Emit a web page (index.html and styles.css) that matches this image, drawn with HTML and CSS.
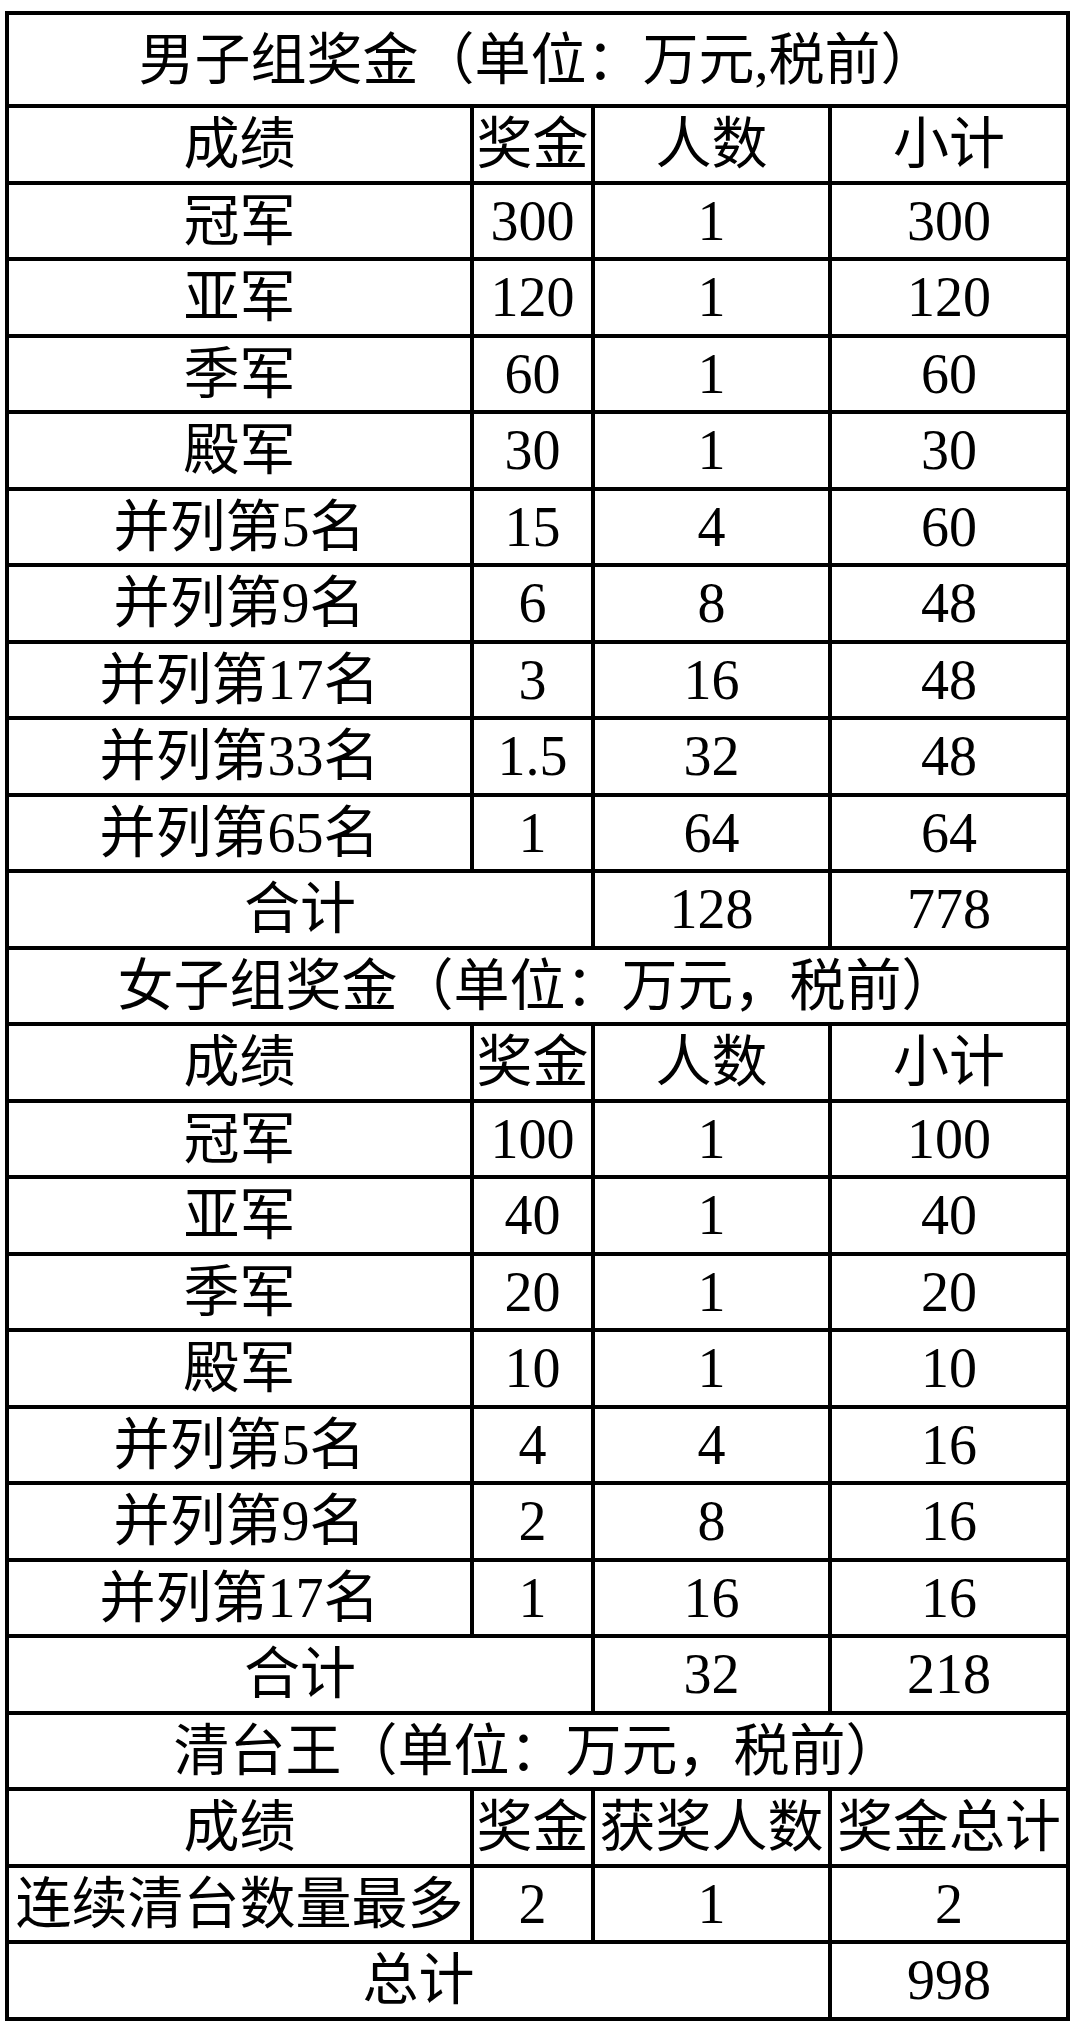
FILE: index.html
```html
<!DOCTYPE html>
<html lang="zh-CN">
<head>
<meta charset="utf-8">
<title>奖金表</title>
<link rel="stylesheet" href="styles.css">
</head>
<body>
<table class="prize">
  <colgroup>
    <col class="c-rank">
    <col class="c-prize">
    <col class="c-count">
    <col class="c-sum">
  </colgroup>
  <tbody>
    <tr class="first-title"><td colspan="4">男子组奖金（单位：万元,税前）</td></tr>
    <tr><td>成绩</td><td>奖金</td><td>人数</td><td>小计</td></tr>
    <tr><td>冠军</td><td>300</td><td>1</td><td>300</td></tr>
    <tr><td>亚军</td><td>120</td><td>1</td><td>120</td></tr>
    <tr><td>季军</td><td>60</td><td>1</td><td>60</td></tr>
    <tr><td>殿军</td><td>30</td><td>1</td><td>30</td></tr>
    <tr><td>并列第5名</td><td>15</td><td>4</td><td>60</td></tr>
    <tr><td>并列第9名</td><td>6</td><td>8</td><td>48</td></tr>
    <tr><td>并列第17名</td><td>3</td><td>16</td><td>48</td></tr>
    <tr><td>并列第33名</td><td>1.5</td><td>32</td><td>48</td></tr>
    <tr><td>并列第65名</td><td>1</td><td>64</td><td>64</td></tr>
    <tr><td colspan="2">合计</td><td>128</td><td>778</td></tr>

    <tr><td colspan="4">女子组奖金（单位：万元，税前）</td></tr>
    <tr><td>成绩</td><td>奖金</td><td>人数</td><td>小计</td></tr>
    <tr><td>冠军</td><td>100</td><td>1</td><td>100</td></tr>
    <tr><td>亚军</td><td>40</td><td>1</td><td>40</td></tr>
    <tr><td>季军</td><td>20</td><td>1</td><td>20</td></tr>
    <tr><td>殿军</td><td>10</td><td>1</td><td>10</td></tr>
    <tr><td>并列第5名</td><td>4</td><td>4</td><td>16</td></tr>
    <tr><td>并列第9名</td><td>2</td><td>8</td><td>16</td></tr>
    <tr><td>并列第17名</td><td>1</td><td>16</td><td>16</td></tr>
    <tr><td colspan="2">合计</td><td>32</td><td>218</td></tr>

    <tr><td colspan="4">清台王（单位：万元，税前）</td></tr>
    <tr><td>成绩</td><td>奖金</td><td>获奖人数</td><td>奖金总计</td></tr>
    <tr><td>连续清台数量最多</td><td>2</td><td>1</td><td>2</td></tr>
    <tr><td colspan="3">总计</td><td>998</td></tr>
  </tbody>
</table>
</body>
</html>
```

FILE: styles.css
```css
html, body {
  margin: 0;
  padding: 0;
  background: #ffffff;
}

body {
  font-family: "Liberation Serif", "Noto Sans CJK SC", serif;
  color: #000000;
}

.prize {
  border-collapse: collapse;
  table-layout: fixed;
  width: 1064px;
  margin: 11px 0 0 5px;
}

.c-rank { width: 465px; }
.c-prize { width: 121px; }
.c-count { width: 237px; }
.c-sum { width: 238px; }

.prize tr {
  height: 76.5px;
}

.prize tr.first-title {
  height: 93px;
}

.prize td {
  border: 4px solid #000000;
  padding: 0;
  text-align: center;
  vertical-align: middle;
  font-size: 56px;
  line-height: 60px;
  white-space: nowrap;
  overflow: hidden;
}
```
